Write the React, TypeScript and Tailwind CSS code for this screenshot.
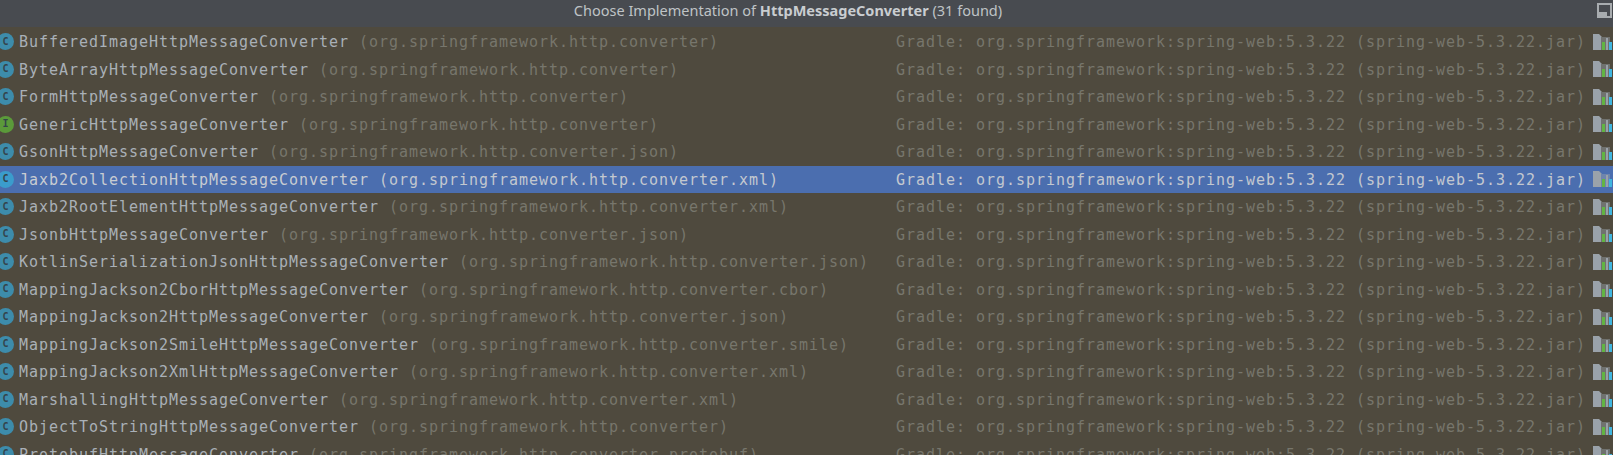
import React from 'react';

type Row = { name: string; pkg: string; kind?: 'I' };

const BASE = 'org.springframework.http.converter';

const rows: Row[] = [
  { name: 'BufferedImageHttpMessageConverter', pkg: BASE },
  { name: 'ByteArrayHttpMessageConverter', pkg: BASE },
  { name: 'FormHttpMessageConverter', pkg: BASE },
  { name: 'GenericHttpMessageConverter', pkg: BASE, kind: 'I' },
  { name: 'GsonHttpMessageConverter', pkg: BASE + '.json' },
  { name: 'Jaxb2CollectionHttpMessageConverter', pkg: BASE + '.xml' },
  { name: 'Jaxb2RootElementHttpMessageConverter', pkg: BASE + '.xml' },
  { name: 'JsonbHttpMessageConverter', pkg: BASE + '.json' },
  { name: 'KotlinSerializationJsonHttpMessageConverter', pkg: BASE + '.json' },
  { name: 'MappingJackson2CborHttpMessageConverter', pkg: BASE + '.cbor' },
  { name: 'MappingJackson2HttpMessageConverter', pkg: BASE + '.json' },
  { name: 'MappingJackson2SmileHttpMessageConverter', pkg: BASE + '.smile' },
  { name: 'MappingJackson2XmlHttpMessageConverter', pkg: BASE + '.xml' },
  { name: 'MarshallingHttpMessageConverter', pkg: BASE + '.xml' },
  { name: 'ObjectToStringHttpMessageConverter', pkg: BASE },
  { name: 'ProtobufHttpMessageConverter', pkg: BASE + '.protobuf' },
];

const SELECTED = 5;

// round class / interface badge, its left edge runs off the window
const KindIcon = ({ kind, selected }: { kind?: 'I'; selected: boolean }) => (
  <div
    className={`w-[17px] h-[17px] -ml-[3px] rounded-full shrink-0 flex items-center justify-center font-['DejaVu_Sans_Mono',monospace] text-[10px] font-bold tracking-normal leading-none text-[#34444b] ${
      kind === 'I' ? 'bg-[#5b9a3a]' : selected ? 'bg-[#3b9ccc]' : 'bg-[#3d8cab]'
    }`}
  >
    {kind === 'I' ? 'I' : 'C'}
  </div>
);

// gradle library folder with little bars
const LibIcon = ({ selected }: { selected: boolean }) => (
  <svg width="20" height="16" viewBox="0 0 20 16" className="shrink-0">
    <path d="M1 0h6l3 3h8v13H1z" fill="#9aa2aa" />
    <rect x="9" y="3" width="11" height="13" fill={selected ? '#4b6eaf' : '#4f4a3e'} opacity="0.55" />
    <rect x="10" y="8" width="3" height="8" fill="#62b543" />
    <rect x="14" y="4" width="2" height="12" fill="#9aa2aa" />
    <rect x="17" y="8" width="3" height="8" fill="#40b6e0" />
  </svg>
);

const App: React.FC = () => {
  return (
    <div className="w-[1613px] h-[455px] overflow-hidden bg-[#4f4a3e] flex flex-col">
      {/* Title bar */}
      <header className="h-[27px] shrink-0 bg-[#484b50] relative flex items-center justify-center pr-[37px] pb-[5px] font-['Noto_Sans',sans-serif] text-[14.5px] text-[#bfc3c6]">
        <span>
          Choose Implementation of <b className="font-bold text-[#c9cdd0]">HttpMessageConverter</b> (31 found)
        </span>
        <div className="absolute right-[1px] top-[3px] w-[15px] h-[15px] border-2 border-[#a8acaf] flex items-end">
          <div className="w-[8px] h-[4px] bg-[#a8acaf]" />
        </div>
      </header>

      {/* Result list */}
      <main className="flex-1 overflow-hidden pt-[1px] font-['DejaVu_Sans_Mono',monospace] text-[15px] tracking-[0.97px] whitespace-nowrap">
        {rows.map((row, i) => {
          const selected = i === SELECTED;
          return (
            <div
              key={row.name}
              className={`h-[27.5px] flex items-center ${selected ? 'bg-[#4b6eaf]' : ''}`}
            >
              <div className="w-[19px] shrink-0 flex">
                <KindIcon kind={row.kind} selected={selected} />
              </div>
              <div className="w-[877px] shrink-0 overflow-hidden pt-[1px]">
                <span className={selected ? 'text-[#c8ccd2]' : 'text-[#a9b0b7]'}>{row.name}</span>
                <span className={selected ? 'text-[#c3c8cf]' : 'text-[#77766c]'}> ({row.pkg})</span>
              </div>
              <div className={`flex-1 pt-[1px] ${selected ? 'text-[#c3c8cf]' : 'text-[#77766c]'}`}>
                Gradle: org.springframework:spring-web:5.3.22 (spring-web-5.3.22.jar)
              </div>
              <div className="pr-[1px]">
                <LibIcon selected={selected} />
              </div>
            </div>
          );
        })}
      </main>
    </div>
  );
};

export default App;
